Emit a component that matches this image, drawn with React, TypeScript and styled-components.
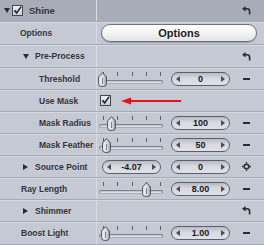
import React from 'react';
import styled, { createGlobalStyle } from 'styled-components';

const GlobalStyle = createGlobalStyle`
  html, body { margin: 0; padding: 0; background: #c5c9d3; }
  body { font-family: "Liberation Sans", Arial, sans-serif; }
`;

const INK = '#2b2c31';

const Panel = styled.div`
  width: 264px;
  height: 245px;
  overflow: hidden;
  background: #c5c9d3;
  display: flex;
  flex-direction: column;
  font-family: "Liberation Sans", Arial, sans-serif;
  font-weight: bold;
  font-size: 8.5px;
  color: #303136;
`;

const Row = styled.div<{ $h: number; $header?: boolean }>`
  flex: none;
  height: ${p => p.$h}px;
  box-sizing: border-box;
  display: grid;
  grid-template-columns: 97px 1fr;
  background: ${p => (p.$header ? '#a8acb8' : '#c5c9d3')};
  border-bottom: 1px solid #a6aab4;
  box-shadow: ${p => (p.$header ? 'none' : 'inset 0 1px 0 #d5d8df')};
`;

const LabelCell = styled.div<{ $indent: number }>`
  display: flex;
  align-items: center;
  padding-left: ${p => p.$indent}px;
  border-right: 1px solid #d8dbe2;
  white-space: nowrap;
  overflow: hidden;
  min-width: 0;
`;

const LabelText = styled.span<{ $gap?: number; $big?: boolean }>`
  margin-left: ${p => p.$gap ?? 0}px;
  font-size: ${p => (p.$big ? '9.5px' : 'inherit')};
  text-shadow: 0 1px 0 rgba(255, 255, 255, 0.25);
`;

const ControlCell = styled.div`
  display: flex;
  align-items: center;
  min-width: 0;
`;

const Tri = styled.span<{ $dir: 'down' | 'right' }>`
  flex: none;
  width: 0;
  height: 0;
  ${p =>
    p.$dir === 'down'
      ? `border-left: 3px solid transparent; border-right: 3px solid transparent; border-top: 5px solid ${INK};`
      : `border-top: 3px solid transparent; border-bottom: 3px solid transparent; border-left: 5px solid ${INK};`}
`;

const Box = styled.span<{ $ml: number }>`
  flex: none;
  margin-left: ${p => p.$ml}px;
  width: 11px;
  height: 11px;
  box-sizing: border-box;
  border: 1px solid #45484f;
  background: linear-gradient(#eef0f4, #c9cdd6);
  display: flex;
  align-items: center;
  justify-content: center;
`;

const Check = ({ ml }: { ml: number }) => (
  <Box $ml={ml}>
    <svg width="9" height="9" viewBox="0 0 9 9">
      <path d="M1.5 4.2 L3.6 7 L8.2 0.6" fill="none" stroke="#1f2024" strokeWidth="1.6" />
    </svg>
  </Box>
);

const IconSlot = styled.div`
  flex: none;
  margin-left: auto;
  margin-right: 4px;
  width: 28px;
  display: flex;
  align-items: center;
  justify-content: center;
`;

const ResetIcon = () => (
  <svg width="9" height="9" viewBox="0 0 9 9">
    <polygon points="0,2.8 3.6,0 3.6,5.6" fill={INK} />
    <path d="M3 2.8 H5 Q7.6 2.8 7.6 5.4 V8.6" fill="none" stroke={INK} strokeWidth="1.6" />
  </svg>
);

const Minus = styled.span`
  width: 7px;
  height: 2px;
  background: ${INK};
`;

const Crosshair = () => (
  <svg width="9" height="9" viewBox="0 0 9 9">
    <circle cx="4.5" cy="4.5" r="2.3" fill="none" stroke={INK} strokeWidth="1.5" />
    <path d="M4.5 0 V1.6 M4.5 7.4 V9 M0 4.5 H1.6 M7.4 4.5 H9" stroke={INK} strokeWidth="1.3" />
  </svg>
);

const OptionsButton = styled.div`
  flex: none;
  margin-left: 4px;
  width: 156px;
  height: 18px;
  box-sizing: border-box;
  border: 1px solid #6f727a;
  border-radius: 9px;
  background: linear-gradient(#ffffff, #f4f4f5 50%, #e2e3e6);
  box-shadow: 0 1px 0 #9fa3ad;
  display: flex;
  align-items: center;
  justify-content: center;
  font-size: 11px;
  color: #1f2024;
`;

const SliderWrap = styled.div`
  position: relative;
  flex: none;
  margin-left: 2px;
  width: 64px;
  height: 16px;
`;

const Ticks = styled.div`
  position: absolute;
  left: 4px;
  width: 58px;
  top: 1px;
  display: flex;
  justify-content: space-between;
`;

const Tick = styled.span`
  width: 1px;
  height: 4px;
  background: #5d6068;
`;

const Track = styled.div`
  position: absolute;
  left: 0;
  right: 0;
  top: 9px;
  height: 4px;
  border-radius: 3px;
  box-sizing: border-box;
  border: 1px solid #80838c;
  border-bottom-color: #a9adb6;
  background: linear-gradient(#b6b9c1, #eceef2);
`;

const ThumbSvg = styled.svg`
  position: absolute;
  top: 1px;
`;

const Slider = ({ pos }: { pos: number }) => (
  <SliderWrap>
    <Ticks>
      {[0, 1, 2, 3, 4].map(i => (
        <Tick key={i} />
      ))}
    </Ticks>
    <Track />
    <ThumbSvg width="9" height="15" viewBox="0 0 9 15" style={{ left: pos }}>
      <defs>
        <linearGradient id="tg" x1="0" x2="1" y1="0" y2="0">
          <stop offset="0" stopColor="#f4f5f7" />
          <stop offset="0.6" stopColor="#d6d8de" />
          <stop offset="1" stopColor="#9fa3ab" />
        </linearGradient>
      </defs>
      <path
        d="M4.5 0.6 L8.4 5 V11.6 Q8.4 14.4 5.8 14.4 H3.2 Q0.6 14.4 0.6 11.6 V5 Z"
        fill="url(#tg)"
        stroke="#4c4f57"
        strokeWidth="1"
      />
      <path d="M4.5 6 V12" stroke="#7d8089" strokeWidth="1" />
    </ThumbSvg>
  </SliderWrap>
);

const FieldBox = styled.div<{ $ml: number }>`
  flex: none;
  margin-left: ${p => p.$ml}px;
  width: 59px;
  height: 14px;
  box-sizing: border-box;
  border: 1px solid #5c5f67;
  border-radius: 7px;
  background: linear-gradient(#b7bac3, #d6d9e0 45%, #dfe1e7);
  display: flex;
  align-items: center;
  padding: 0 4px;
  font-size: 9px;
  color: #17181b;
`;

const FieldValue = styled.span`
  flex: 1;
  text-align: center;
`;

const Arrow = styled.span<{ $dir: 'left' | 'right' }>`
  flex: none;
  width: 0;
  height: 0;
  border-top: 3px solid transparent;
  border-bottom: 3px solid transparent;
  ${p => (p.$dir === 'left' ? 'border-right: 4px solid #4a4d55;' : 'border-left: 4px solid #4a4d55;')}
`;

const Field = ({ value, ml = 8 }: { value: string; ml?: number }) => (
  <FieldBox $ml={ml}>
    <Arrow $dir="left" />
    <FieldValue>{value}</FieldValue>
    <Arrow $dir="right" />
  </FieldBox>
);

const RedArrow = styled.svg`
  flex: none;
  margin-left: 10px;
`;

export default function App() {
  return (
    <>
      <GlobalStyle />
      <Panel>
        <Row $h={22} $header>
          <LabelCell $indent={4}>
            <Tri $dir="down" />
            <Check ml={2} />
            <LabelText $gap={6} $big>Shine</LabelText>
          </LabelCell>
          <ControlCell>
            <IconSlot><ResetIcon /></IconSlot>
          </ControlCell>
        </Row>

        <Row $h={23}>
          <LabelCell $indent={20}>
            <LabelText>Options</LabelText>
          </LabelCell>
          <ControlCell>
            <OptionsButton>Options</OptionsButton>
          </ControlCell>
        </Row>

        <Row $h={23}>
          <LabelCell $indent={23}>
            <Tri $dir="down" />
            <LabelText $gap={6}>Pre-Process</LabelText>
          </LabelCell>
          <ControlCell>
            <IconSlot><ResetIcon /></IconSlot>
          </ControlCell>
        </Row>

        <Row $h={22}>
          <LabelCell $indent={39}>
            <LabelText>Threshold</LabelText>
          </LabelCell>
          <ControlCell>
            <Slider pos={-1} />
            <Field value="0" />
            <IconSlot><Minus /></IconSlot>
          </ControlCell>
        </Row>

        <Row $h={22}>
          <LabelCell $indent={39}>
            <LabelText>Use Mask</LabelText>
          </LabelCell>
          <ControlCell>
            <Check ml={3} />
            <RedArrow width="60" height="8" viewBox="0 0 60 8">
              <polygon points="0,4 10,0.5 10,7.5" fill="#e8101a" />
              <rect x="9" y="3" width="51" height="2" fill="#e8101a" />
            </RedArrow>
          </ControlCell>
        </Row>

        <Row $h={22}>
          <LabelCell $indent={39}>
            <LabelText>Mask Radius</LabelText>
          </LabelCell>
          <ControlCell>
            <Slider pos={8} />
            <Field value="100" />
            <IconSlot><Minus /></IconSlot>
          </ControlCell>
        </Row>

        <Row $h={22}>
          <LabelCell $indent={39}>
            <LabelText>Mask Feather</LabelText>
          </LabelCell>
          <ControlCell>
            <Slider pos={3} />
            <Field value="50" />
            <IconSlot><Minus /></IconSlot>
          </ControlCell>
        </Row>

        <Row $h={22}>
          <LabelCell $indent={23}>
            <Tri $dir="right" />
            <LabelText $gap={7}>Source Point</LabelText>
          </LabelCell>
          <ControlCell>
            <Field value="-4.07" ml={5} />
            <Field value="0" ml={10} />
            <IconSlot><Crosshair /></IconSlot>
          </ControlCell>
        </Row>

        <Row $h={22}>
          <LabelCell $indent={21}>
            <LabelText>Ray Length</LabelText>
          </LabelCell>
          <ControlCell>
            <Slider pos={43} />
            <Field value="8.00" />
            <IconSlot><Minus /></IconSlot>
          </ControlCell>
        </Row>

        <Row $h={22}>
          <LabelCell $indent={23}>
            <Tri $dir="right" />
            <LabelText $gap={7}>Shimmer</LabelText>
          </LabelCell>
          <ControlCell>
            <IconSlot><ResetIcon /></IconSlot>
          </ControlCell>
        </Row>

        <Row $h={23}>
          <LabelCell $indent={21}>
            <LabelText>Boost Light</LabelText>
          </LabelCell>
          <ControlCell>
            <Slider pos={2} />
            <Field value="1.00" />
            <IconSlot><Minus /></IconSlot>
          </ControlCell>
        </Row>
      </Panel>
    </>
  );
}
